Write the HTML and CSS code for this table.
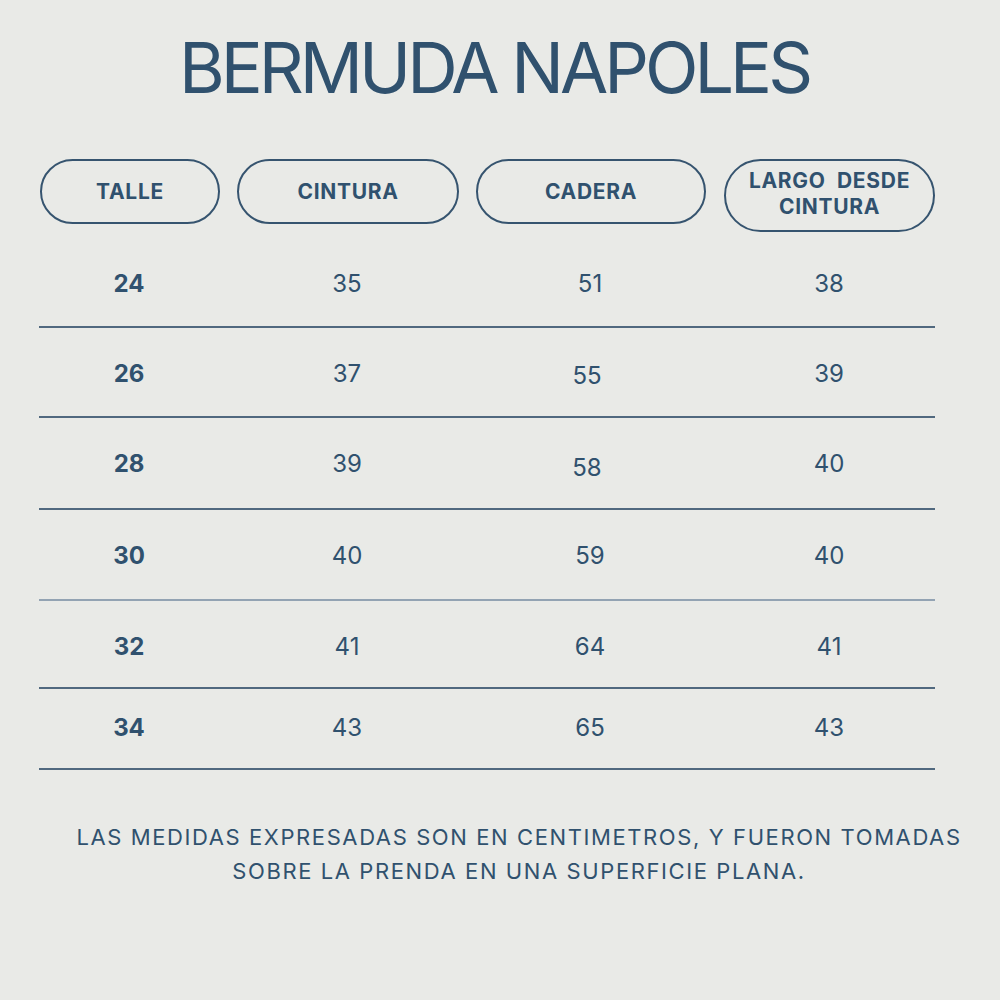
FILE: index.html
```html
<!DOCTYPE html>
<html lang="es">
<head>
<meta charset="utf-8">
<title>Bermuda Napoles</title>
<link rel="stylesheet" href="styles.css">
</head>
<body>
<main class="page">
  <h1 class="title">BERMUDA NAPOLES</h1>
  <div class="header">
    <div class="pill pill-talle">TALLE</div>
    <div class="pill pill-cintura">CINTURA</div>
    <div class="pill pill-cadera">CADERA</div>
    <div class="pill pill-largo">LARGO&nbsp; DESDE<br>CINTURA</div>
  </div>
  <div class="table">
    <div class="row"><span class="size">24</span><span>35</span><span>51</span><span>38</span></div>
    <div class="row"><span class="size">26</span><span>37</span><span class="low">55</span><span>39</span></div>
    <div class="row"><span class="size">28</span><span>39</span><span class="lower">58</span><span>40</span></div>
    <div class="row"><span class="size">30</span><span>40</span><span>59</span><span>40</span></div>
    <div class="row"><span class="size">32</span><span>41</span><span>64</span><span>41</span></div>
    <div class="row last"><span class="size">34</span><span>43</span><span>65</span><span>43</span></div>
  </div>
  <p class="note">LAS MEDIDAS EXPRESADAS SON EN CENTIMETROS, Y FUERON TOMADAS<br>SOBRE LA PRENDA EN UNA SUPERFICIE PLANA.</p>
</main>
</body>
</html>
```
FILE: styles.css
```css
html, body {
  margin: 0;
  padding: 0;
  background: #e9eae7;
}
.page {
  width: 1000px;
  height: 1000px;
  box-sizing: border-box;
  padding-top: 28px;
  color: #30516e;
  font-family: Inter, "Noto Sans", sans-serif;
}
.title {
  margin: 0 0 0 -12px;
  text-align: center;
  font-weight: 400;
  font-size: 70px;
  line-height: 80px;
  letter-spacing: -4px;
}
.header {
  display: flex;
  align-items: flex-start;
  gap: 17px;
  margin: 51px 0 0 40px;
}
.pill {
  box-sizing: border-box;
  height: 65px;
  border: 2px solid #36546f;
  border-radius: 34px;
  display: flex;
  align-items: center;
  justify-content: center;
  text-align: center;
  font-weight: 700;
  font-size: 21px;
  line-height: 26px;
  letter-spacing: 0.7px;
}
.pill-talle { width: 180px; }
.pill-cintura { width: 222px; }
.pill-cadera { width: 230px; }
.pill-largo { width: 211px; height: 73px; border-radius: 37px; padding-bottom: 4px; margin-left: 1px; }
.table {
  width: 896px;
  margin-left: 39px;
  margin-top: 8px;
}
.row {
  display: grid;
  grid-template-columns: 180px 256px 230px 230px;
  box-sizing: border-box;
  height: 90px;
  padding-top: 31px;
  border-bottom: 2px solid #51697f;
  font-size: 24px;
  line-height: 30px;
}
.row span {
  text-align: center;
}
.row span:last-child {
  position: relative;
  left: 9px;
}
.row:nth-child(1) { height: 88px; padding-top: 29px; }
.row:nth-child(3) { height: 92px; }
.row:nth-child(4) { height: 91px; border-bottom-color: #93a3b3; }
.row:nth-child(5) { height: 88px; }
.row.last { height: 81px; padding-top: 24px; }
.size { font-weight: 700; }
.low { position: relative; top: 2px; left: -3px; }
.lower { position: relative; top: 4px; left: -3px; }
.note {
  margin: 50px 0 0 38px;
  text-align: center;
  font-size: 22px;
  line-height: 34px;
  letter-spacing: 1.6px;
}
```
